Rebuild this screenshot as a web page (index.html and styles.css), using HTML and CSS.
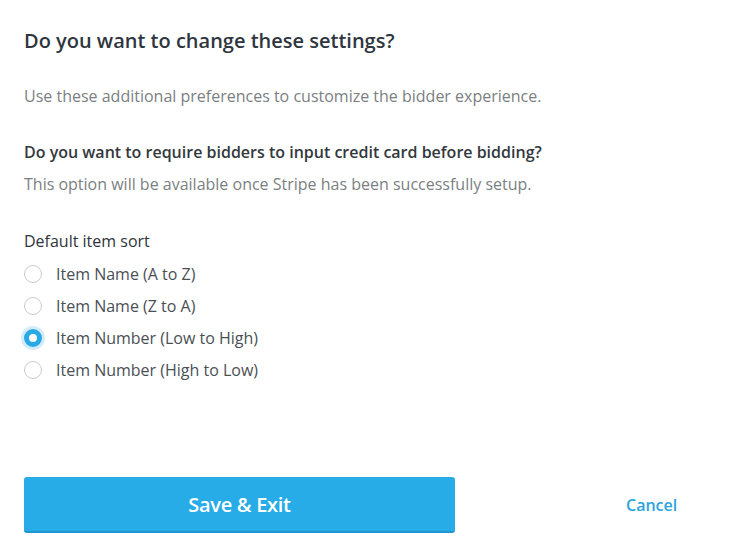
FILE: index.html
```html
<!DOCTYPE html>
<html>
<head>
<meta charset="utf-8">
<link rel="stylesheet" href="styles.css">
</head>
<body>
<div class="panel">
  <h1 class="title">Do you want to change these settings?</h1>
  <p class="intro">Use these additional preferences to customize the bidder experience.</p>
  <div class="section">
    <h2 class="label">Do you want to require bidders to input credit card before bidding?</h2>
    <p class="help">This option will be available once Stripe has been successfully setup.</p>
  </div>
  <div class="section sort">
    <h2 class="label">Default item sort</h2>
    <ul class="radios">
      <li class="radio"><span class="dot"></span><span>Item Name (A to Z)</span></li>
      <li class="radio"><span class="dot"></span><span>Item Name (Z to A)</span></li>
      <li class="radio checked"><span class="dot"></span><span>Item Number (Low to High)</span></li>
      <li class="radio"><span class="dot"></span><span>Item Number (High to Low)</span></li>
    </ul>
  </div>
  <div class="actions">
    <button class="save">Save &amp; Exit</button>
    <a class="cancel">Cancel</a>
  </div>
</div>
</body>
</html>
```
FILE: styles.css
```css
* { box-sizing: border-box; }
html, body { margin: 0; padding: 0; background: #fff; }
body { font-family: "Open Sans", "Liberation Sans", sans-serif; color: #3a3f44; }
.panel { padding: 27px 24px 0 24px; display: flex; flex-direction: column; }
.title { margin: 0; font-size: 20px; font-weight: 600; line-height: 28px; color: #2f3640; }
.intro { margin: 30px 0 0; font-size: 16px; line-height: 22px; color: #7b7f83; }
.section { margin-top: 34px; }
.label { margin: 0; font-size: 16px; font-weight: 600; line-height: 22px; color: #33383d; }
.help { margin: 10px 0 0; font-size: 16px; line-height: 22px; color: #7b7f83; }
.sort { margin-top: 35px; }
.sort .label { font-weight: 500; color: #2f3439; }
.radios { list-style: none; margin: 6px 0 0; padding: 0; }
.radio { display: flex; align-items: center; gap: 14px; height: 32px; font-size: 16px; color: #4a4f54; }
.dot { width: 18px; height: 18px; border: 1px solid #c9cbcd; border-radius: 50%; background: #fff; flex: none; }
.radio.checked .dot { border: 5px solid #29a9e6; background: #fff; box-shadow: 0 0 0 3px #d4ecfa; }
.actions { margin-top: 91px; display: flex; align-items: center; }
.save { width: 431px; height: 56px; border: none; border-radius: 3px; background: #28ace8; border-bottom: 2px solid #1f96cf; color: #fff; font-family: "Open Sans", "Liberation Sans", sans-serif; font-size: 20px; font-weight: 600; letter-spacing: -0.3px; }
.cancel { margin-left: 171px; font-size: 16px; font-weight: 600; color: #2ba4de; }
```
